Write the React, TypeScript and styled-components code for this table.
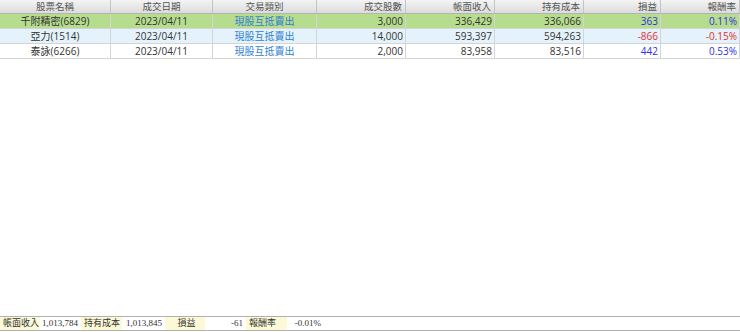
import React from 'react';
import styled, { createGlobalStyle } from 'styled-components';

const GlobalStyle = createGlobalStyle`
  html, body {
    margin: 0;
    padding: 0;
    background: #ffffff;
  }
  body {
    font-family: "Open Sans", "Noto Sans CJK TC", sans-serif;
  }
`;

const cols = '111px 102px 104px 89px 89px 89px 77px 79px';

const Page = styled.div`
  width: 740px;
  height: 332px;
  display: flex;
  flex-direction: column;
  overflow: hidden;
`;

const Grid = styled.div`
  flex: 1;
  display: flex;
  flex-direction: column;
`;

const HeaderRow = styled.div`
  display: grid;
  grid-template-columns: ${cols};
  height: 13px;
  background: linear-gradient(#f4f4f4, #dcdcdc);
  border-bottom: 1px solid #b4b4b4;
`;

const HeadCell = styled.div<{ $align?: string }>`
  font-size: 9.5px;
  line-height: 13px;
  color: #555;
  text-align: ${p => p.$align || 'center'};
  padding: 0 3px;
  border-right: 1px solid #c4c4c4;
  white-space: nowrap;
  overflow: hidden;
`;

const Row = styled.div<{ $bg: string }>`
  display: grid;
  grid-template-columns: ${cols};
  height: 14px;
  background: ${p => p.$bg};
  border-bottom: 1px solid #d4d4d4;
`;

const Cell = styled.div<{ $align?: string; $color?: string }>`
  font-size: 10px;
  line-height: 14px;
  color: ${p => p.$color || '#333'};
  text-align: ${p => p.$align || 'center'};
  padding: 0 2px;
  border-right: 1px solid #d4d4d4;
  white-space: nowrap;
  overflow: hidden;
`;

const Footer = styled.div`
  display: flex;
  height: 13px;
  border-top: 1px solid #b0b0b0;
  border-bottom: 1px solid #b0b0b0;
  margin-bottom: 1px;
  font-family: "Liberation Serif", "Noto Sans CJK TC", serif;
  font-size: 9px;
  line-height: 13px;
  color: #333;
`;

const Label = styled.div<{ $w: number; $align?: string }>`
  width: ${p => p.$w}px;
  background: #fcf9d6;
  text-align: ${p => p.$align || 'left'};
  padding-left: 3px;
  box-sizing: border-box;
  white-space: nowrap;
`;

const Value = styled.div<{ $w: number }>`
  width: ${p => p.$w}px;
  text-align: right;
  padding-right: 3px;
  box-sizing: border-box;
  white-space: nowrap;
`;

const BLUE = '#2f7fd1';
const POS = '#3030e0';
const NEG = '#e03030';

const rows = [
  { name: '千附精密(6829)', date: '2023/04/11', type: '現股互抵賣出', qty: '3,000', income: '336,429', cost: '336,066', pl: '363', rate: '0.11%', bg: '#b6dc8e' },
  { name: '亞力(1514)', date: '2023/04/11', type: '現股互抵賣出', qty: '14,000', income: '593,397', cost: '594,263', pl: '-866', rate: '-0.15%', bg: '#e4f3fb' },
  { name: '泰詠(6266)', date: '2023/04/11', type: '現股互抵賣出', qty: '2,000', income: '83,958', cost: '83,516', pl: '442', rate: '0.53%', bg: '#ffffff' },
];

const heads: [string, string][] = [
  ['股票名稱', 'center'],
  ['成交日期', 'center'],
  ['交易類別', 'center'],
  ['成交股數', 'right'],
  ['帳面收入', 'right'],
  ['持有成本', 'right'],
  ['損益', 'right'],
  ['報酬率', 'right'],
];

export default function App() {
  return (
    <Page>
      <GlobalStyle />
      <Grid>
        <HeaderRow>
          {heads.map(([h, a]) => (
            <HeadCell key={h} $align={a}>{h}</HeadCell>
          ))}
        </HeaderRow>
        {rows.map(r => {
          const c = r.pl.startsWith('-') ? NEG : POS;
          return (
            <Row key={r.name} $bg={r.bg}>
              <Cell>{r.name}</Cell>
              <Cell>{r.date}</Cell>
              <Cell $color={BLUE}>{r.type}</Cell>
              <Cell $align="right">{r.qty}</Cell>
              <Cell $align="right">{r.income}</Cell>
              <Cell $align="right">{r.cost}</Cell>
              <Cell $align="right" $color={c}>{r.pl}</Cell>
              <Cell $align="right" $color={c}>{r.rate}</Cell>
            </Row>
          );
        })}
      </Grid>
      <Footer>
        <Label $w={40}>帳面收入</Label>
        <Value $w={41}>1,013,784</Value>
        <Label $w={41}>持有成本</Label>
        <Value $w={43}>1,013,845</Value>
        <Label $w={40} $align="center">損益</Label>
        <Value $w={41}>-61</Value>
        <Label $w={41}>報酬率</Label>
        <Value $w={37}>-0.01%</Value>
      </Footer>
    </Page>
  );
}
